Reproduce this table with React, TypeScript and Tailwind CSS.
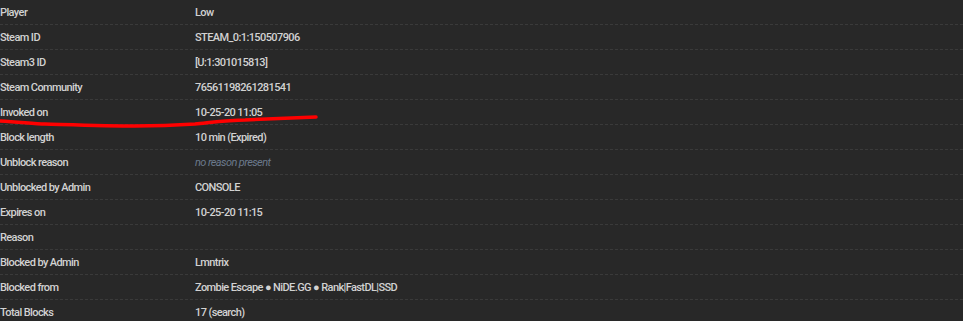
import React from "react";

const rows: { label: string; value: React.ReactNode }[] = [
  { label: "Player", value: "Low" },
  { label: "Steam ID", value: "STEAM_0:1:150507906" },
  { label: "Steam3 ID", value: "[U:1:301015813]" },
  { label: "Steam Community", value: "76561198261281541" },
  { label: "Invoked on", value: "10-25-20 11:05" },
  { label: "Block length", value: "10 min (Expired)" },
  {
    label: "Unblock reason",
    value: <span className="italic font-normal text-[#6b7a8c]">no reason present</span>,
  },
  { label: "Unblocked by Admin", value: "CONSOLE" },
  { label: "Expires on", value: "10-25-20 11:15" },
  { label: "Reason", value: "" },
  { label: "Blocked by Admin", value: "Lmntrix" },
  { label: "Blocked from", value: "Zombie Escape ● NiDE.GG ● Rank|FastDL|SSD" },
  { label: "Total Blocks", value: "17 (search)" },
];

export default function App() {
  return (
    <div
      className="relative w-[963px] h-[321px] overflow-hidden bg-[#282828] text-[#d2d2d2] text-[11px] font-medium tracking-[-0.6px]"
      style={{ fontFamily: "Roboto, 'Noto Sans', sans-serif" }}
    >
      <div className="flex flex-col">
        {rows.map((r) => (
          <div
            key={r.label}
            className="flex items-center h-[25px] pt-[2px] border-b border-dashed border-[#3a3a3a]"
          >
            <div className="w-[195px] shrink-0">{r.label}</div>
            <div>{r.value}</div>
          </div>
        ))}
      </div>
      <svg
        className="absolute left-0 top-0 pointer-events-none"
        width="963"
        height="321"
      >
        <path
          d="M0 121 C 20 122, 35 124, 45 124 C 80 125, 110 126, 135 126 C 160 126, 180 125, 195 124 C 215 122, 230 120, 245 120 C 270 119, 295 118, 316 117"
          stroke="#ff0000"
          strokeWidth="3.5"
          fill="none"
          strokeLinecap="round"
        />
      </svg>
    </div>
  );
}
